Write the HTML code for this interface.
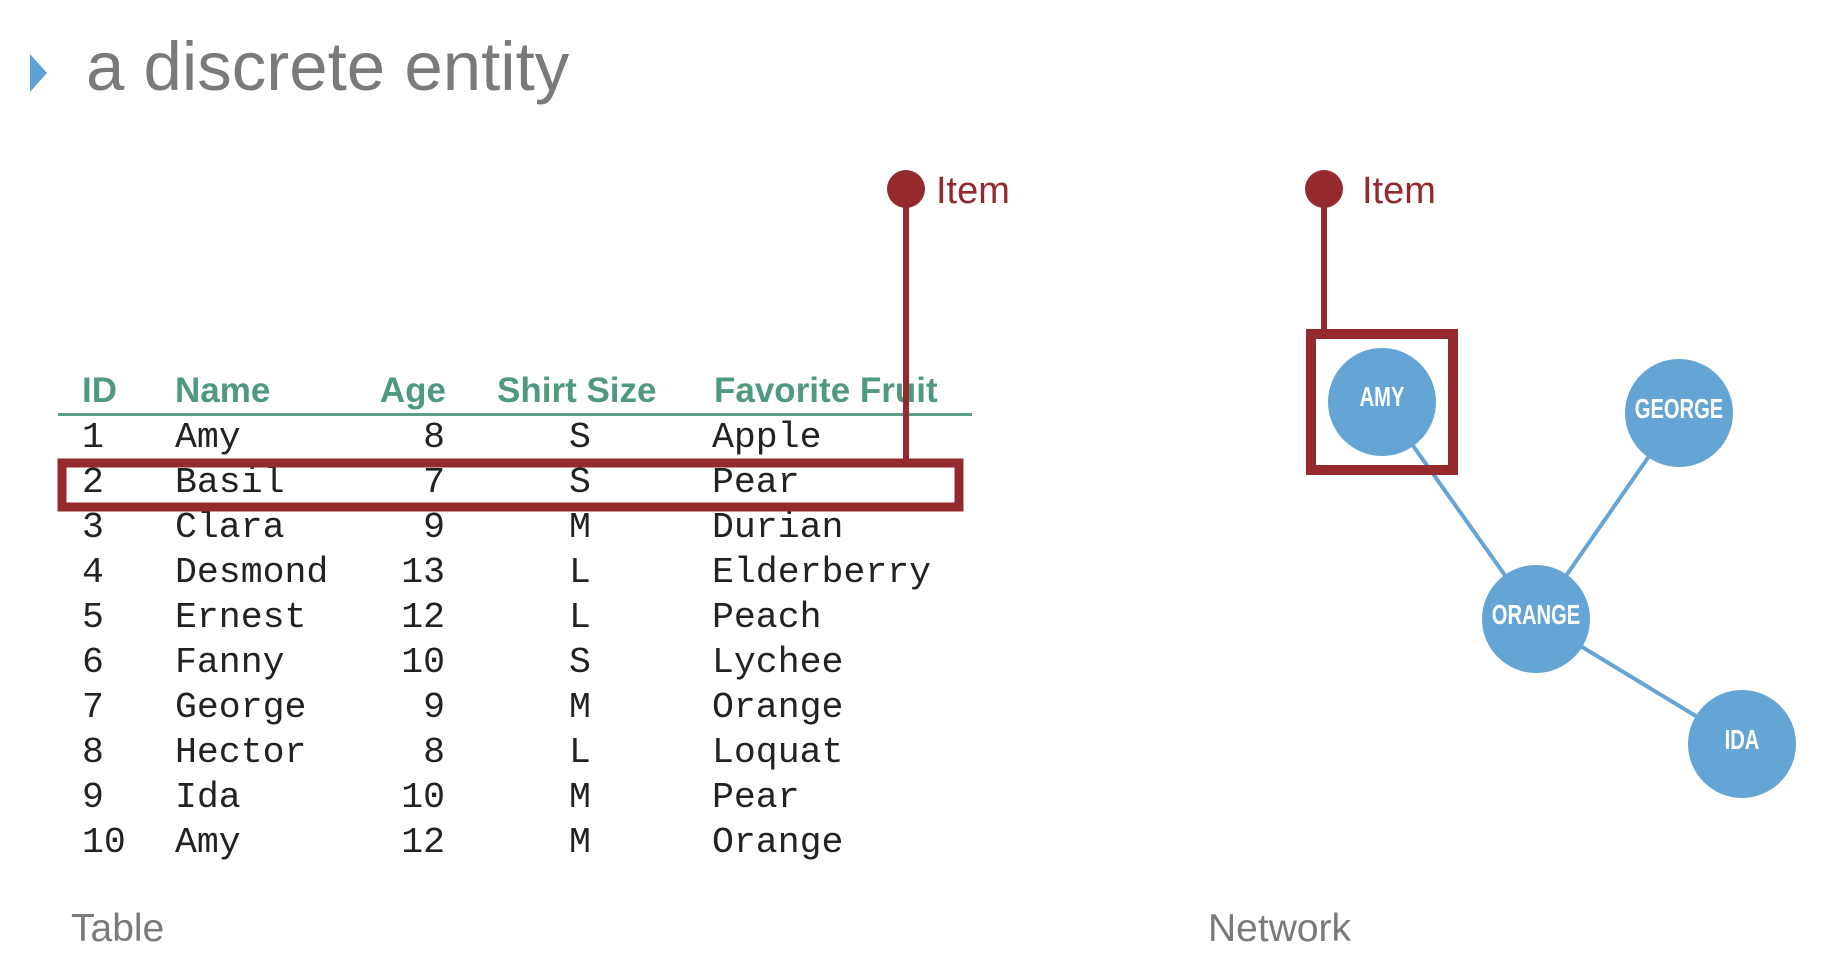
<!DOCTYPE html>
<html><head><meta charset="utf-8"><style>
html,body{margin:0;padding:0;background:#fff;}
body{width:1848px;height:975px;position:relative;overflow:hidden;}
svg{position:absolute;left:0;top:0;}
</style></head><body>
<svg width="1848" height="975" viewBox="0 0 1848 975">
<polygon points="30,54 47,73 30,92" fill="#5fa3d6"/>
<text x="86" y="90" font-family="Liberation Sans, sans-serif" font-size="69" fill="#7a7a7a">a discrete entity</text>

<g font-family="Liberation Sans, sans-serif" font-weight="bold" font-size="35" fill="#4f9a7d">
<text x="82" y="402">ID</text>
<text x="175" y="402">Name</text>
<text x="446" y="402" text-anchor="end">Age</text>
<text x="497" y="402">Shirt Size</text>
<text x="714" y="402">Favorite Fruit</text>
</g>
<rect x="58" y="413" width="914" height="3" fill="#5a9f84"/>

<g font-family="Liberation Mono, monospace" font-size="36.5" fill="#222">
<text x="82" y="447">1</text><text x="175" y="447">Amy</text><text x="445" y="447" text-anchor="end">8</text><text x="580" y="447" text-anchor="middle">S</text><text x="712" y="447">Apple</text>
<text x="82" y="492">2</text><text x="175" y="492">Basil</text><text x="445" y="492" text-anchor="end">7</text><text x="580" y="492" text-anchor="middle">S</text><text x="712" y="492">Pear</text>
<text x="82" y="537">3</text><text x="175" y="537">Clara</text><text x="445" y="537" text-anchor="end">9</text><text x="580" y="537" text-anchor="middle">M</text><text x="712" y="537">Durian</text>
<text x="82" y="582">4</text><text x="175" y="582">Desmond</text><text x="445" y="582" text-anchor="end">13</text><text x="580" y="582" text-anchor="middle">L</text><text x="712" y="582">Elderberry</text>
<text x="82" y="627">5</text><text x="175" y="627">Ernest</text><text x="445" y="627" text-anchor="end">12</text><text x="580" y="627" text-anchor="middle">L</text><text x="712" y="627">Peach</text>
<text x="82" y="672">6</text><text x="175" y="672">Fanny</text><text x="445" y="672" text-anchor="end">10</text><text x="580" y="672" text-anchor="middle">S</text><text x="712" y="672">Lychee</text>
<text x="82" y="717">7</text><text x="175" y="717">George</text><text x="445" y="717" text-anchor="end">9</text><text x="580" y="717" text-anchor="middle">M</text><text x="712" y="717">Orange</text>
<text x="82" y="762">8</text><text x="175" y="762">Hector</text><text x="445" y="762" text-anchor="end">8</text><text x="580" y="762" text-anchor="middle">L</text><text x="712" y="762">Loquat</text>
<text x="82" y="807">9</text><text x="175" y="807">Ida</text><text x="445" y="807" text-anchor="end">10</text><text x="580" y="807" text-anchor="middle">M</text><text x="712" y="807">Pear</text>
<text x="82" y="852">10</text><text x="175" y="852">Amy</text><text x="445" y="852" text-anchor="end">12</text><text x="580" y="852" text-anchor="middle">M</text><text x="712" y="852">Orange</text>
</g>

<rect x="62" y="463" width="897" height="44" fill="none" stroke="#952a2e" stroke-width="9"/>
<rect x="903" y="189" width="6" height="272" fill="#952a2e"/>
<circle cx="906" cy="189" r="19" fill="#952a2e"/>
<text x="936" y="203" font-family="Liberation Sans, sans-serif" font-size="38" fill="#952a2e">Item</text>

<g stroke="#64a5d5" stroke-width="4">
<line x1="1382" y1="402" x2="1536" y2="619"/>
<line x1="1679" y1="413" x2="1536" y2="619"/>
<line x1="1536" y1="619" x2="1742" y2="744"/>
</g>
<g fill="#64a5d5">
<circle cx="1382" cy="402" r="54"/>
<circle cx="1679" cy="413" r="54"/>
<circle cx="1536" cy="619" r="54"/>
<circle cx="1742" cy="744" r="54"/>
</g>
<g font-family="Liberation Sans Narrow, Liberation Sans, sans-serif" font-weight="bold" font-size="28" fill="#fff" text-anchor="middle">
<text x="1382" y="406" transform="translate(1382 0) scale(0.72 1) translate(-1382 0)">AMY</text>
<text x="1679" y="418" transform="translate(1679 0) scale(0.72 1) translate(-1679 0)">GEORGE</text>
<text x="1536" y="624" transform="translate(1536 0) scale(0.72 1) translate(-1536 0)">ORANGE</text>
<text x="1742" y="749" transform="translate(1742 0) scale(0.72 1) translate(-1742 0)">IDA</text>
</g>
<rect x="1311" y="334" width="142" height="136" fill="none" stroke="#952a2e" stroke-width="10"/>
<rect x="1321" y="189" width="6" height="142" fill="#952a2e"/>
<circle cx="1324" cy="189" r="19" fill="#952a2e"/>
<text x="1362" y="203" font-family="Liberation Sans, sans-serif" font-size="38" fill="#952a2e">Item</text>

<text x="71" y="941" font-family="Liberation Sans, sans-serif" font-size="39" fill="#7a7a7a">Table</text>
<text x="1208" y="941" font-family="Liberation Sans, sans-serif" font-size="39" fill="#7a7a7a">Network</text>
</svg>
</body></html>
